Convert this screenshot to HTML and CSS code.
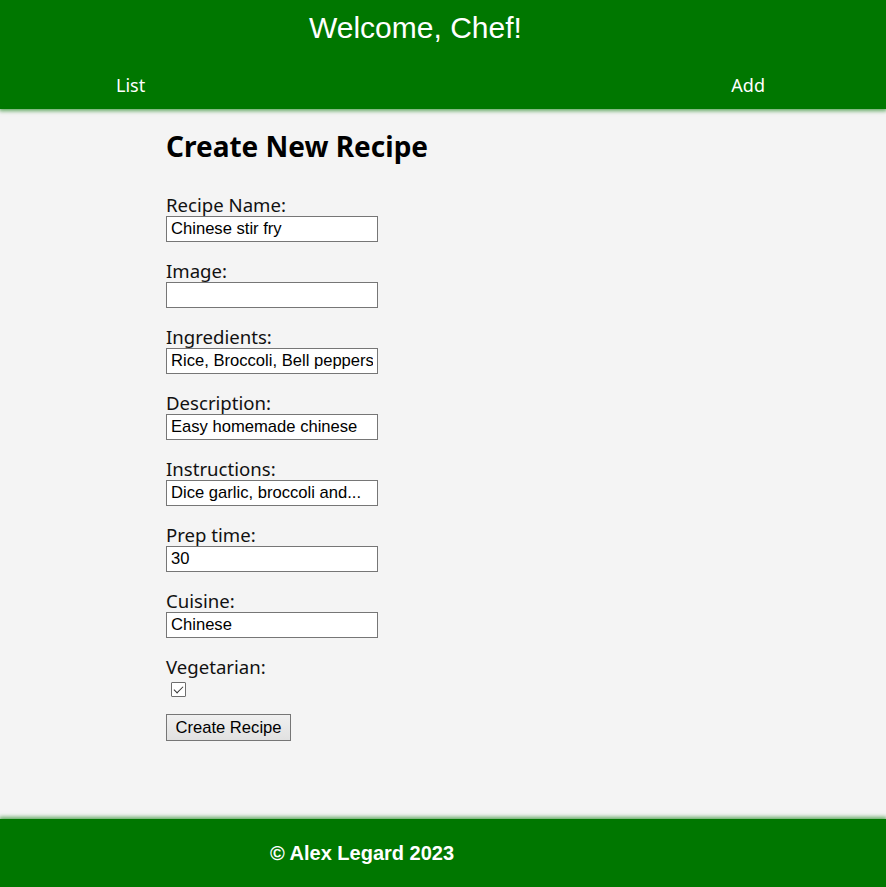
FILE: index.html
```html
<!DOCTYPE html>
<html lang="en">
<head>
<meta charset="utf-8">
<title>Create New Recipe</title>
<link rel="stylesheet" href="styles.css">
</head>
<body>
<header class="site-header">
  <h1 class="site-title">Welcome, Chef!</h1>
  <nav class="site-nav">
    <a class="nav-link" href="#">List</a>
    <a class="nav-link" href="#">Add</a>
  </nav>
</header>
<main class="content">
  <h2 class="page-title">Create New Recipe</h2>
  <form class="recipe-form">
    <div class="field">
      <label class="field-label" for="name">Recipe Name:</label>
      <input class="text-input" id="name" type="text" value="Chinese stir fry">
    </div>
    <div class="field">
      <label class="field-label" for="image">Image:</label>
      <input class="text-input" id="image" type="text" value="">
    </div>
    <div class="field">
      <label class="field-label" for="ingredients">Ingredients:</label>
      <input class="text-input" id="ingredients" type="text" value="Rice, Broccoli, Bell peppers">
    </div>
    <div class="field">
      <label class="field-label" for="description">Description:</label>
      <input class="text-input" id="description" type="text" value="Easy homemade chinese">
    </div>
    <div class="field">
      <label class="field-label" for="instructions">Instructions:</label>
      <input class="text-input" id="instructions" type="text" value="Dice garlic, broccoli and...">
    </div>
    <div class="field">
      <label class="field-label" for="prep">Prep time:</label>
      <input class="text-input" id="prep" type="text" value="30">
    </div>
    <div class="field">
      <label class="field-label" for="cuisine">Cuisine:</label>
      <input class="text-input" id="cuisine" type="text" value="Chinese">
    </div>
    <div class="field">
      <label class="field-label" for="veg">Vegetarian:</label>
      <input class="check-input" id="veg" type="checkbox" checked>
    </div>
    <button class="submit-btn" type="button">Create Recipe</button>
  </form>
</main>
<footer class="site-footer">
  <p class="footer-text">© Alex Legard 2023</p>
</footer>
</body>
</html>
```
FILE: styles.css
```css
html, body {
  margin: 0;
  padding: 0;
}
body {
  background: #f4f4f4;
  color: #111;
  font-family: "Noto Sans", "Open Sans", sans-serif;
  min-height: 100vh;
  display: flex;
  flex-direction: column;
}
.site-header {
  background: #007700;
  height: 109px;
  box-sizing: border-box;
  padding-top: 11px;
  box-shadow: 0 1px 4px 1px rgba(0, 119, 0, 0.6);
  position: relative;
  z-index: 1;
}
.site-title {
  margin: 0 0 0 309px;
  font-family: "Liberation Sans", Arial, sans-serif;
  font-weight: normal;
  font-size: 30px;
  line-height: 34px;
  color: #fff;
}
.site-nav {
  display: flex;
  justify-content: space-between;
  padding: 0 121px 0 116px;
  margin-top: 28px;
}
.nav-link {
  color: #fff;
  text-decoration: none;
  font-size: 18px;
  line-height: 24px;
}
.content {
  flex: 1;
  padding: 0 0 0 166px;
}
.page-title {
  margin: 18px 0 28px;
  font-size: 28px;
  line-height: 38px;
  font-weight: bold;
  color: #000;
}
.recipe-form {
  display: flex;
  flex-direction: column;
  align-items: flex-start;
}
.field {
  display: flex;
  flex-direction: column;
  align-items: flex-start;
  margin-bottom: 17px;
}
.field-label {
  font-size: 18.6px;
  line-height: 23px;
  color: #111;
}
.text-input {
  box-sizing: border-box;
  width: 212px;
  height: 26px;
  margin: 0;
  padding: 0 4px;
  border: 1px solid #767676;
  border-radius: 0;
  background: #fff;
  font-family: "Liberation Sans", Arial, sans-serif;
  font-size: 16.6px;
  color: #000;
}
.check-input {
  appearance: none;
  -webkit-appearance: none;
  box-sizing: border-box;
  width: 15px;
  height: 15px;
  margin: 4px 0 0 5px;
  border: 1px solid #6e6e6e;
  border-radius: 1px;
  background: #fff;
  position: relative;
}
.check-input:checked::after {
  content: "";
  position: absolute;
  left: 4px;
  top: 1px;
  width: 4px;
  height: 8px;
  border-right: 1.5px solid #333;
  border-bottom: 1.5px solid #333;
  transform: rotate(45deg);
}
.field:last-of-type {
  margin-bottom: 17px;
}
.submit-btn {
  box-sizing: border-box;
  width: 125px;
  height: 27px;
  margin: 0;
  padding: 0;
  border: 1px solid #767676;
  border-radius: 0;
  background: linear-gradient(#f0f0f0, #e1e1e1);
  font-family: "Liberation Sans", Arial, sans-serif;
  font-size: 16.6px;
  color: #000;
}
.site-footer {
  background: #007700;
  height: 68px;
  box-shadow: 0 -1px 4px 1px rgba(0, 119, 0, 0.6);
  display: flex;
  align-items: center;
  padding-left: 270px;
}
.footer-text {
  margin: 0;
  color: #fff;
  font-family: "Liberation Sans", Arial, sans-serif;
  font-weight: bold;
  font-size: 20px;
}
```
